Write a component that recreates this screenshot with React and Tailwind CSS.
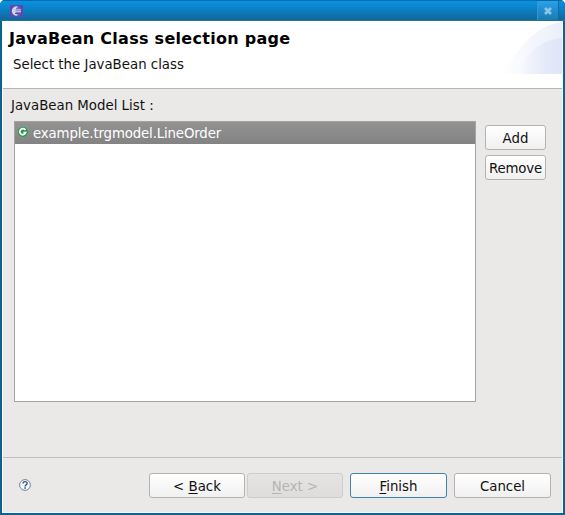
import React from "react";

function Button({ children, className = "", tone = "normal" }) {
  const tones = {
    normal: "border-[#b5b3b2] text-[#111] bg-linear-to-b from-white to-[#f1f0f0]",
    focus: "border-[#3f83a8] text-[#111] bg-linear-to-b from-white to-[#f1f0f0]",
    disabled: "border-[#cfcdcc] text-[#b5b3b2] bg-linear-to-b from-[#e6e4e3] to-[#dfdddc]",
  };
  return (
    <button
      className={`flex h-[25px] shrink-0 items-center justify-center rounded-[3px] border p-0 pt-[2px] whitespace-nowrap ${tones[tone]} ${className}`}
    >
      {children}
    </button>
  );
}

function Underlined({ children }) {
  return <span className="underline decoration-1 underline-offset-2">{children}</span>;
}

function EclipseIcon() {
  return (
    <svg width="13" height="12" viewBox="0 0 13 12">
      <rect width="13" height="12" fill="#5a48b4" />
      <circle cx="6.5" cy="6" r="4.6" fill="#7471bb" />
      <path d="M8 1.7A4.6 4.6 0 1 0 8 10.3C4.5 9 4.5 3 8 1.7Z" fill="#d5d6ea" />
      <path d="M3 4.9h8M2.5 6.7h8.5" stroke="#c9cdea" strokeWidth="1" />
      <path d="M5 8.5h5" stroke="#5748a0" strokeWidth="1" />
    </svg>
  );
}

function TitleBar() {
  return (
    <div className="flex h-[21px] shrink-0 items-start justify-between border-t border-b border-t-[#0868a0] border-b-[#23709b] bg-linear-to-b from-[#0593e4] to-[#10679b] pl-[10px]">
      <div className="pt-[4px]">
        <EclipseIcon />
      </div>
      <div className="mr-[6px] flex h-[19px] w-[22px] items-center justify-center border-l border-r border-l-[#2a9add] border-r-[#106b9f] bg-linear-to-b from-[#28a2eb] to-[#1b7ab0]">
        <svg width="8" height="8" viewBox="0 0 8 8">
          <path d="M1 1l6 6M7 1L1 7" stroke="#8fc6e8" strokeWidth="2.6" />
        </svg>
      </div>
    </div>
  );
}

function Banner() {
  return (
    <svg className="shrink-0" width="60" height="53" viewBox="0 0 60 53">
      <defs>
        <linearGradient id="outer" x1="0" x2="1" y1="0" y2="0">
          <stop offset="0" stopColor="#fff" />
          <stop offset="0.5" stopColor="#f3f6fd" />
          <stop offset="1" stopColor="#ebeffa" />
        </linearGradient>
        <linearGradient id="inner" x1="0" x2="1" y1="0" y2="0">
          <stop offset="0" stopColor="#f6f8fe" />
          <stop offset="0.6" stopColor="#e4eaf8" />
          <stop offset="1" stopColor="#dfe5f7" />
        </linearGradient>
      </defs>
      <path d="M0 53C12 37 29 4 60 1V53Z" fill="url(#outer)" />
      <path d="M19 53C21 31 40 19 60 17V53Z" fill="url(#inner)" />
    </svg>
  );
}

function ClassIcon() {
  return (
    <svg className="mt-[4px] shrink-0" width="12" height="12" viewBox="0 0 12 12">
      <circle cx="6" cy="6" r="5.4" fill="#32914f" stroke="#71ae80" strokeWidth="0.7" />
      <path d="M8.4 4.1A3 3 0 1 0 8.7 6.6H6.4" fill="none" stroke="#fff" strokeWidth="1.7" />
    </svg>
  );
}

function HelpIcon() {
  return (
    <svg width="12" height="12" viewBox="0 0 12 12">
      <circle cx="6" cy="6" r="5.4" fill="#f8fafc" stroke="#6887ad" strokeWidth="1" />
      <path d="M4 4.5C4 2 8.1 2 8.1 4.4C8.1 5.8 6.1 5.9 6.1 7.4" fill="none" stroke="#345680" strokeWidth="1.4" />
      <path d="M5.3 8.2h1.6v1.5H5.3z" fill="#345680" />
    </svg>
  );
}

export default function App() {
  return (
    <div className="bg-white font-['DejaVu_Sans',sans-serif] text-[13.33px] leading-4 text-[#111]">
      <div className="flex h-[515px] w-[565px] flex-col overflow-hidden rounded-t-[5px] bg-[#0d6292]">
        <TitleBar />
        <div className="mr-[2px] mb-[2px] ml-[2px] flex grow flex-col border-r border-b border-l border-[#f8f8f8] bg-[#ebe9e8]">
          <header className="flex h-[68px] shrink-0 justify-between border-b border-[#b7b5b4] bg-white">
            <div className="pl-[6px]">
              <h1 className="mt-[8px] text-[16px] leading-5 font-bold tracking-[0.28px] whitespace-nowrap text-black">
                JavaBean Class selection page
              </h1>
              <p className="mt-[8px] pl-[4px]">Select the JavaBean class</p>
            </div>
            <Banner />
          </header>
          <main className="flex grow flex-col pl-[11px]">
            <div className="mt-[9px] -ml-[3px]">JavaBean Model List :</div>
            <div className="mt-[7px] flex gap-[9px]">
              <div className="h-[281px] w-[462px] shrink-0 border border-[#a5a3a2] bg-white">
                <div className="flex h-[22px] gap-[4px] bg-linear-to-b from-[#929292] to-[#838383] pl-[2px] text-white">
                  <ClassIcon />
                  <span className="mt-[4px] tracking-[-0.15px]">example.trgmodel.LineOrder</span>
                </div>
              </div>
              <div className="mt-[4px] flex flex-col gap-[5px]">
                <Button className="w-[61px]">Add</Button>
                <Button className="w-[61px] tracking-[-0.15px]">Remove</Button>
              </div>
            </div>
          </main>
          <footer className="flex h-[55px] shrink-0 items-start border-t border-[#c2c0bf] pt-[15px] pl-[16px]">
            <div className="mt-[6px] mr-[118px]">
              <HelpIcon />
            </div>
            <Button className="mr-[2px] w-[96px]">
              <span><span>&lt; </span><Underlined>B</Underlined>ack</span>
            </Button>
            <Button className="mr-[7px] w-[96px]" tone="disabled">
              <span><Underlined>N</Underlined>ext &gt;</span>
            </Button>
            <Button className="mr-[7px] w-[97px]" tone="focus">
              <span><Underlined>F</Underlined>inish</span>
            </Button>
            <Button className="w-[97px]">Cancel</Button>
          </footer>
        </div>
      </div>
    </div>
  );
}
